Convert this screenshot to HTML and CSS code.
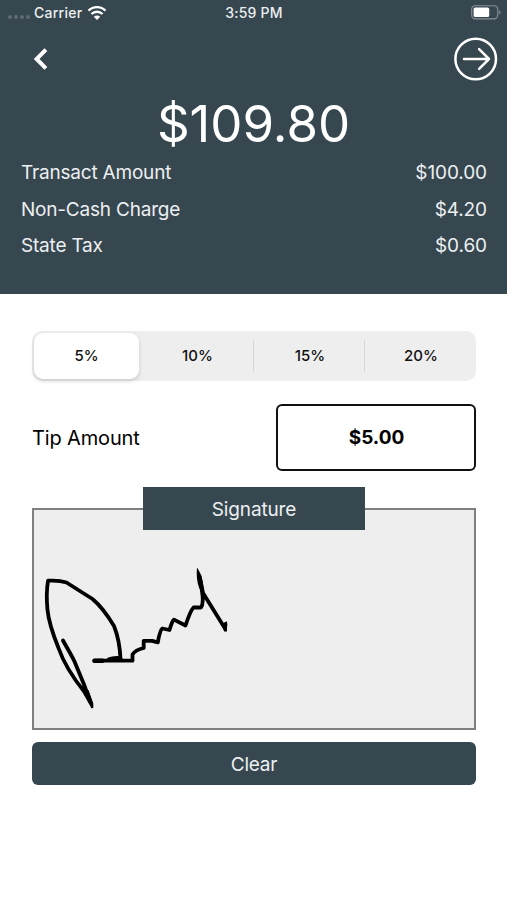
FILE: index.html
```html
<!DOCTYPE html>
<html lang="en">
<head>
    <meta charset="UTF-8">
    <meta name="viewport" content="width=device-width, initial-scale=1.0">
    <title>Tip and Signature</title>
    <link rel="stylesheet" href="styles.css">
</head>
<body>

<header class="header">
    <div class="status-bar">
        <div class="carrier">
            <span class="signal"><i></i><i></i><i></i><i></i></span>
            <span>Carrier</span>
            <svg class="wifi" width="20" height="16" viewBox="0 0 20 16">
                <path d="M1.5 5.7a12 12 0 0 1 17 0M4.5 9a7.8 7.8 0 0 1 11 0" fill="none" stroke="#fff" stroke-width="2.4"/>
                <path d="M10 15l-3.2-3.3a4.6 4.6 0 0 1 6.4 0z" fill="#fff"/>
            </svg>
        </div>
        <span class="time">3:59 PM</span>
        <svg class="battery" width="31" height="15" viewBox="0 0 31 15">
            <rect x="0.7" y="0.7" width="26" height="13.2" rx="3.6" fill="none" stroke="#87919a" stroke-width="1.1"/>
            <rect x="2.6" y="2.6" width="15.6" height="9.4" rx="1.6" fill="#fff"/>
            <path d="M28.2 5v4.6c1.8-.8 1.8-3.8 0-4.6z" fill="#87919a"/>
        </svg>
    </div>

    <nav class="nav">
        <svg class="back" width="16" height="24" viewBox="0 0 16 24">
            <path d="M13.9 2.6L4.6 12l9.3 9.4" fill="none" stroke="#fff" stroke-width="4"/>
        </svg>
        <svg class="next" width="44" height="44" viewBox="0 0 44 44" fill="none" stroke="#fff" stroke-width="2.5" stroke-linecap="round" stroke-linejoin="round">
            <circle cx="21.7" cy="22" r="20.3"/>
            <path d="M10 22h25M25.1 12.2L35 22l-9.9 9.8"/>
        </svg>
    </nav>

    <h1 class="total">$109.80</h1>

    <div class="charges">
        <div class="charge"><span>Transact Amount</span><span class="price">$100.00</span></div>
        <div class="charge"><span>Non-Cash Charge</span><span class="price">$4.20</span></div>
        <div class="charge"><span>State Tax</span><span class="price">$0.60</span></div>
    </div>
</header>

<main class="content">
    <div class="segments">
        <button class="segment active">5%</button>
        <button class="segment">10%</button>
        <button class="segment">15%</button>
        <button class="segment">20%</button>
    </div>

    <div class="tip-row">
        <span class="tip-label">Tip Amount</span>
        <div class="tip-value">$5.00</div>
    </div>

    <section class="signature">
        <h2 class="signature-title">Signature</h2>
        <svg class="signature-pad" width="440" height="218" viewBox="0 0 440 218">
            <g fill="none" stroke="#000" stroke-width="3.8" stroke-linecap="round" stroke-linejoin="round">
                <path d="M29 130.500C33 138 37 144 40.500 151.500L50 174.500L56.500 192.500L50.500 182C40 169 30 154 24.500 138C18 122 14.500 110 13.500 100C12.500 90 12.500 80 14 70.700C20 70.300 26 70.300 32.500 72.500L58.500 89C67 96 74 106 80 116C84 126 86 138 86.500 149"/>
                <path d="M60.500 150.700H98.500V144.500C101 140.500 105 139 109.700 138V130.800H118L123.800 132.400C125 126 126 120 128.300 118.500L135.500 120C137 115 138 111 140 109.600L151.500 115.500C154 108 157 100 159.500 97.500H167C169.500 94 168.500 84 167.800 80L165.500 66L169 83L191 118.500L191.500 114"/>
                <path d="M60.500 150.700h8M75 149.700q5-2 11-1.200" stroke-width="4.6"/>
            </g>
            <path d="M163 57.500c3.500 5 6.200 12 6.500 22l-4.200-1c-2.500-7-3-14-2.300-21zM188.500 115l4.500-4v10.500h-3zM49.500 183l5-3 4.800 13.500v4.500l-2 .2z"/>
        </svg>
    </section>

    <button class="clear">Clear</button>
</main>

</body>
</html>
```
FILE: styles.css
```css
* {
    box-sizing: border-box;
}

body {
    margin: 0;
    background: #fff;
    color: #000;
    font-family: Inter, "Liberation Sans", sans-serif;
}

button {
    margin: 0;
    padding: 0;
    border: none;
    font-family: inherit;
}

.header {
    height: 294px;
    background-color: #37474f;
    color: #fff;
}

/* Status bar */
.status-bar {
    display: grid;
    grid-template-columns: 1fr auto 1fr;
    align-items: center;
    height: 26px;
    padding: 0 5px 1px 8px;
    font-size: 14px;
    font-weight: 500;
    letter-spacing: 0.25px;
    color: #eceff1;
}

.carrier {
    display: flex;
    align-items: center;
}

.signal {
    display: flex;
    gap: 2px;
    width: 26px;
    padding-top: 9px;
}

.signal i {
    width: 4px;
    height: 4px;
    border-radius: 50%;
    background-color: #5d6b73;
}

.wifi {
    margin-left: 5px;
}

.time {
    margin-right: 2px;
}

.battery {
    justify-self: end;
}

/* Navigation */
.nav {
    display: flex;
    justify-content: space-between;
    align-items: center;
    height: 66px;
    padding: 0 9px 0 32px;
}

.total {
    margin: 0;
    height: 62px;
    padding-top: 1px;
    line-height: 62px;
    font-size: 51px;
    font-weight: 400;
    text-align: center;
}

.charges {
    padding: 1px 20px 0 21px;
}

.charge {
    display: flex;
    justify-content: space-between;
    height: 36.5px;
    line-height: 36.5px;
    font-size: 19px;
    letter-spacing: -0.2px;
    color: #eceff1;
}

.price {
    letter-spacing: -0.1px;
}

/* Tip selection */
.content {
    padding: 37px 31px 0 32px;
}

.segments {
    display: grid;
    grid-template-columns: 108px 114px 111px 111px;
    height: 50px;
    padding: 2px 0;
    border-radius: 10px;
    background-color: #eee;
}

.segment {
    position: relative;
    padding-bottom: 1px;
    background: none;
    font-size: 15px;
    font-weight: 500;
    color: #111;
}

.segment:not(.active) {
    padding-left: 1px;
}

.segment.active {
    margin: 0 1px 0 2px;
    border-radius: 9px;
    background-color: #fff;
    box-shadow: 0 2px 4px rgba(0, 0, 0, 0.16);
}

.segment + .segment:not(:last-child)::after {
    content: "";
    position: absolute;
    top: 7px;
    right: 0;
    width: 1px;
    height: 32px;
    background-color: #d6d6d6;
}

.tip-row {
    display: flex;
    justify-content: space-between;
    align-items: center;
    margin-top: 23px;
}

.tip-label {
    font-size: 20px;
    letter-spacing: -0.15px;
}

.tip-value {
    width: 200px;
    height: 67px;
    padding-left: 1px;
    border: 2px solid #111;
    border-radius: 6px;
    line-height: 63px;
    font-size: 19px;
    font-weight: 700;
    text-align: center;
}

/* Signature pad */
.signature {
    display: flex;
    flex-direction: column;
    align-items: center;
    height: 222px;
    margin-top: 37px;
    border: 2px solid #7f7f7f;
    background-color: #eee;
}

.signature-title {
    flex: none;
    width: 222px;
    height: 43px;
    margin: -23px 0 -20px;
    background-color: #37474f;
    line-height: 45px;
    font-size: 19px;
    font-weight: 400;
    letter-spacing: -0.15px;
    color: #eceff1;
    text-align: center;
}

.signature-pad {
    flex: none;
}

.clear {
    display: block;
    width: 100%;
    height: 43px;
    margin-top: 12px;
    padding-top: 2px;
    border-radius: 6px;
    background-color: #37474f;
    font-size: 19px;
    letter-spacing: -0.2px;
    color: #eceff1;
}
```
